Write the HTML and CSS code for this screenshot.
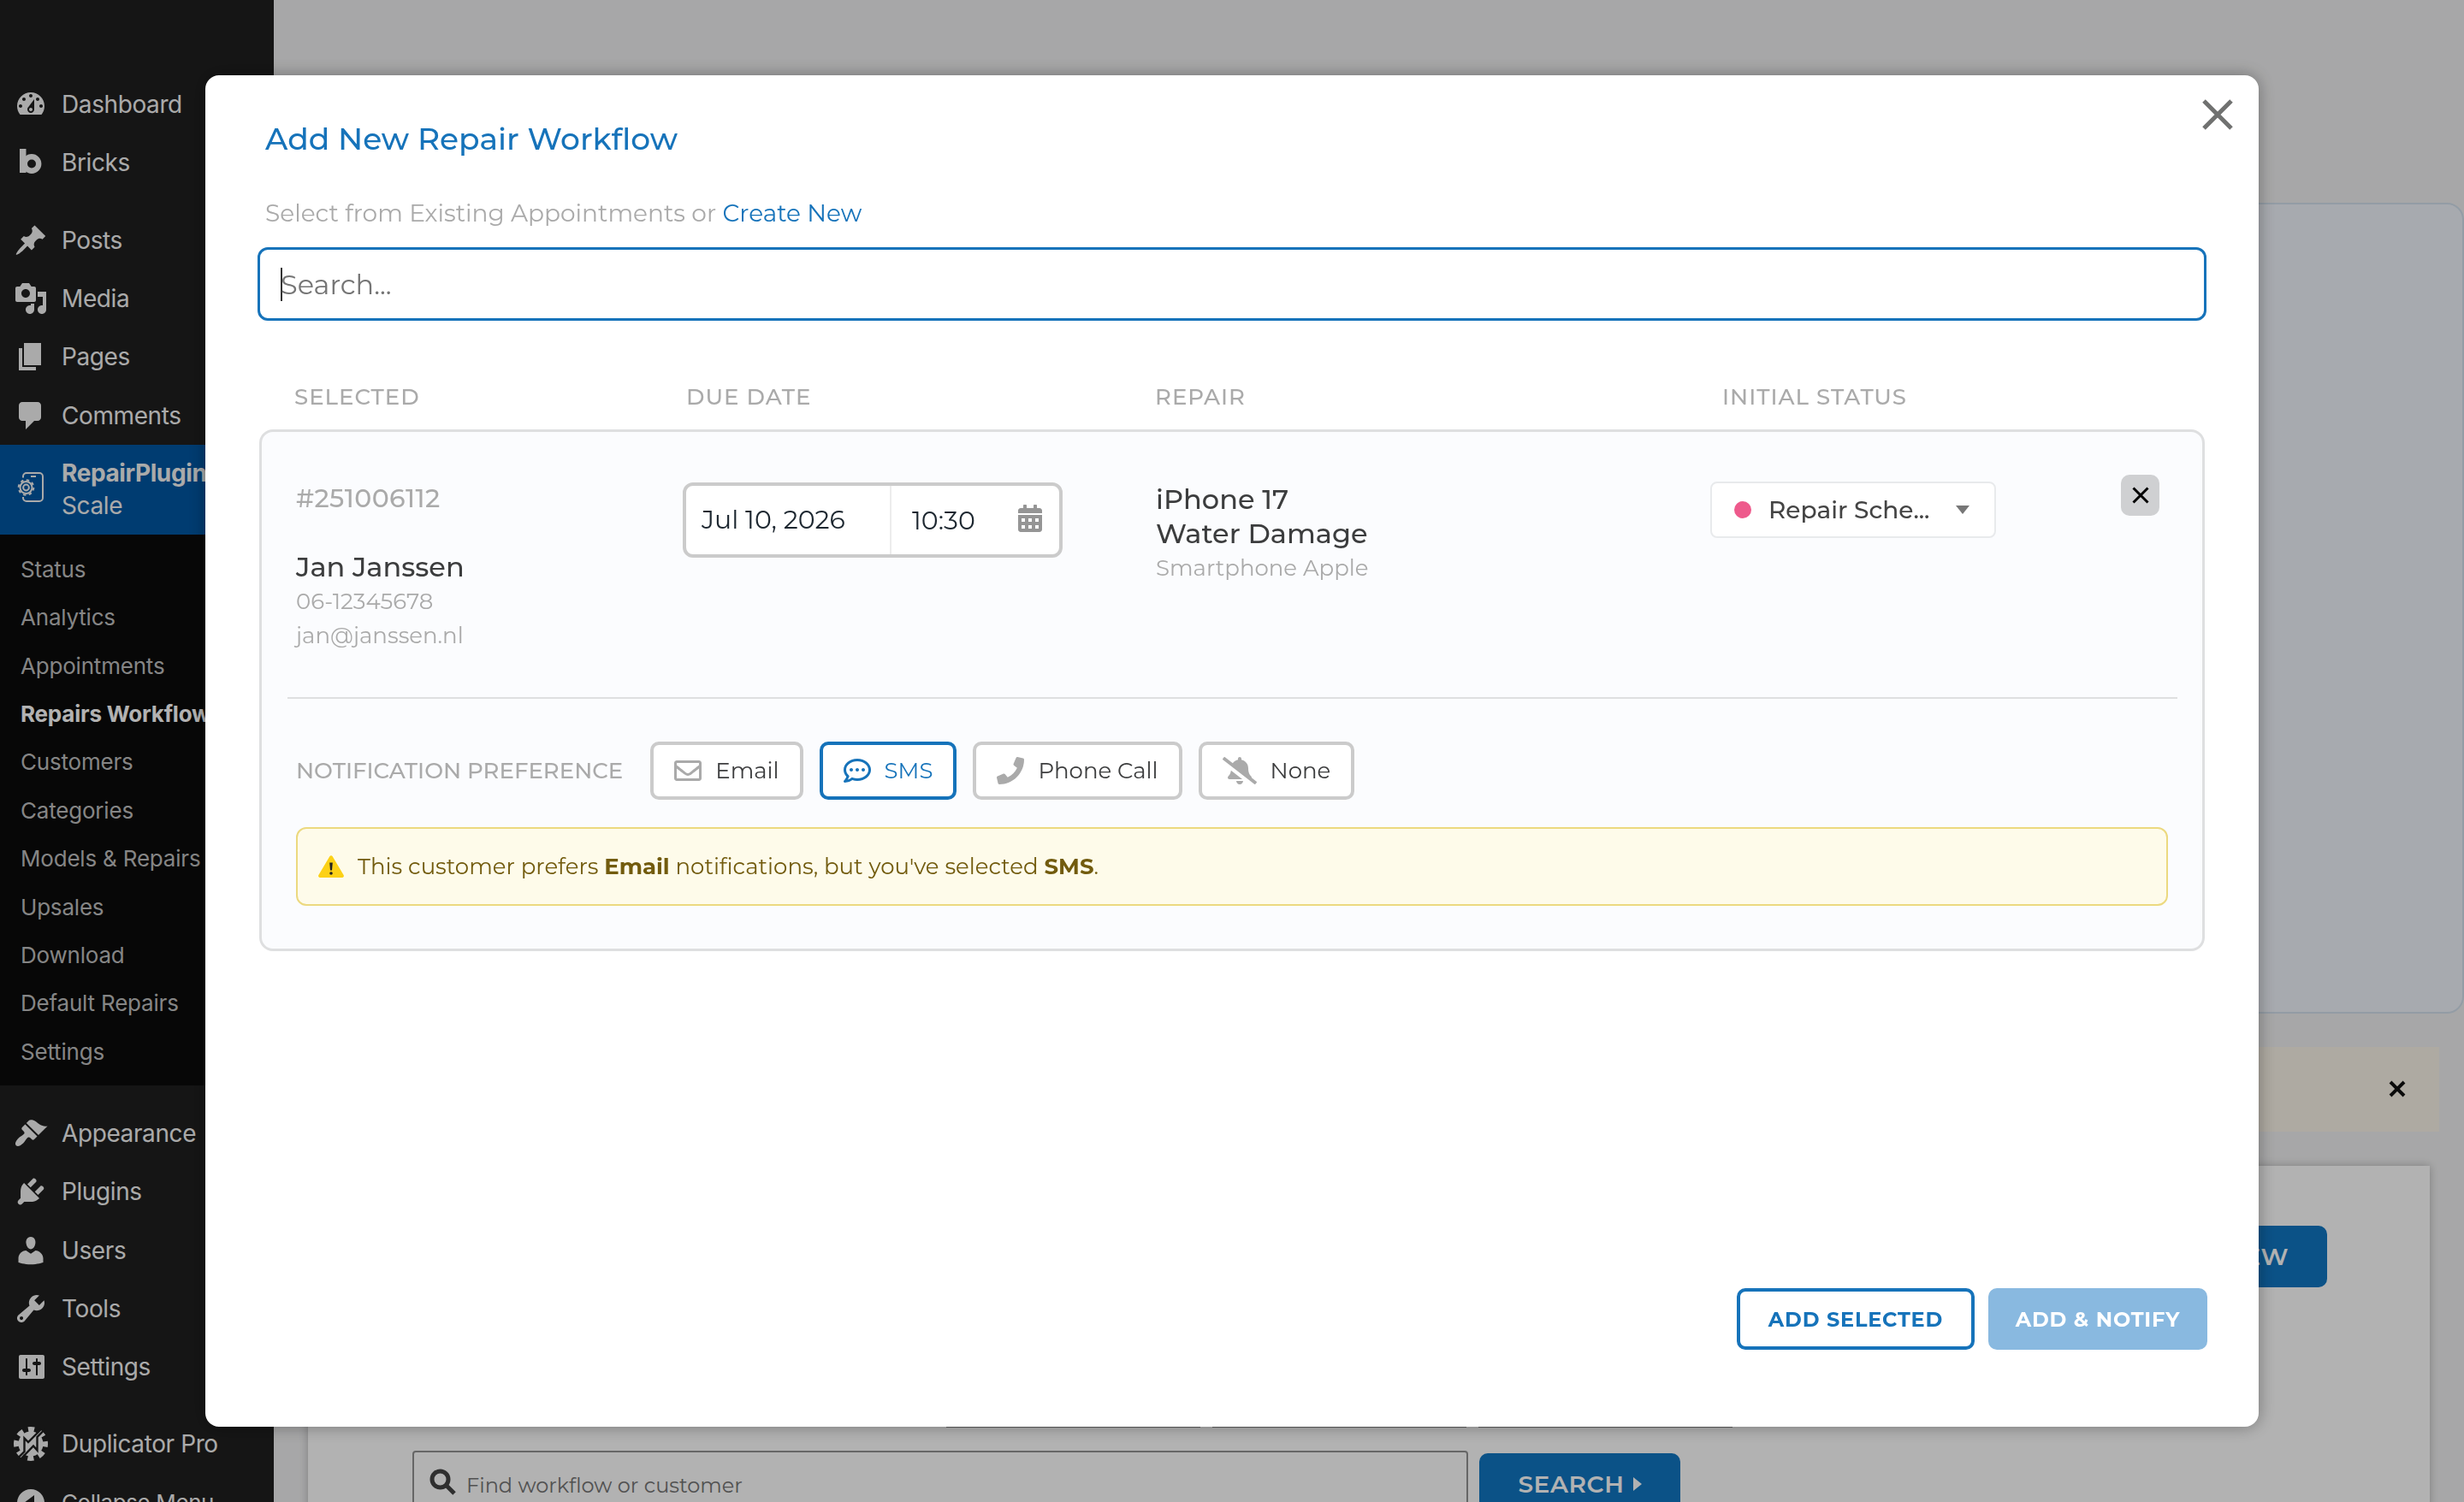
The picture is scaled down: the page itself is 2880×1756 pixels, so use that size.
FILE: index.html
```
<!DOCTYPE html>
<html lang="en">
  <head>
    <meta charset="UTF-8" />
    <meta name="viewport" content="width=device-width, initial-scale=1.0" />
    <title>Add New Repair Workflow</title>
    <link rel="stylesheet" href="styles.css">
  </head>
  <body>
    <div class="page">
      <nav class="sidebar">
        <ul class="menu">
          <li>
            <svg viewBox="0 0 20 20"><path fill-rule="evenodd" d="M3.76 16h12.48c1.1-1.37 1.76-3.11 1.76-5 0-4.42-3.58-8-8-8s-8 3.58-8 8c0 1.89.66 3.63 1.76 5zM10 4c.55 0 1 .45 1 1s-.45 1-1 1-1-.45-1-1 .45-1 1-1zM6 6c.55 0 1 .45 1 1s-.45 1-1 1-1-.45-1-1 .45-1 1-1zm8 0c.55 0 1 .45 1 1s-.45 1-1 1-1-.45-1-1 .45-1 1-1zm-5.37 5.55L12 7v6c0 1.1-.9 2-2 2s-2-.9-2-2c0-.57.24-1.08.63-1.45zM4 10c.55 0 1 .45 1 1s-.45 1-1 1-1-.45-1-1 .45-1 1-1zm12 0c.55 0 1 .45 1 1s-.45 1-1 1-1-.45-1-1 .45-1 1-1zm-5 3c0-.55-.45-1-1-1s-1 .45-1 1 .45 1 1 1 1-.45 1-1z"/></svg>
            <a href="#">Dashboard</a>
          </li>
          <li>
            <svg viewBox="0 0 40 40"><rect x="7" y="4" width="7.5" height="28"/><circle cx="21" cy="21.5" r="8.2" fill="none" stroke="currentColor" stroke-width="6.4"/></svg>
            <a href="#">Bricks</a>
          </li>
          <li class="separator"></li>
          <li>
            <svg viewBox="0 0 20 20"><path d="M10.44 3.02l1.82-1.82 6.36 6.35-1.83 1.82c-1.05-.68-2.48-.57-3.41.36l-.75.75c-.92.93-1.04 2.35-.35 3.41l-1.83 1.82-2.41-2.41-2.8 2.79c-.42.42-3.38 2.71-3.8 2.29s1.86-3.39 2.28-3.81l2.79-2.79L4.1 9.36l1.83-1.82c1.05.69 2.48.57 3.4-.36l.75-.75c.93-.92 1.05-2.35.36-3.41z"/></svg>
            <a href="#">Posts</a>
          </li>
          <li>
            <svg viewBox="0 0 20 20"><path fill-rule="evenodd" d="M13 11V4c0-.55-.45-1-1-1h-1.67L9 1H5L3.67 3H2c-.55 0-1 .45-1 1v7c0 .55.45 1 1 1h10c.55 0 1-.45 1-1zM7 4.5c1.38 0 2.5 1.12 2.5 2.5S8.38 9.5 7 9.5 4.5 8.38 4.5 7 5.62 4.5 7 4.5zM14 6h5v10.5c0 1.38-1.12 2.5-2.5 2.5S14 17.88 14 16.5s1.12-2.5 2.5-2.5c.17 0 .34.02.5.05V9h-3V6zm-4 8.05V13h2v3.5c0 1.38-1.12 2.5-2.5 2.5S7 17.88 7 16.5 8.12 14 9.5 14c.17 0 .34.02.5.05z"/></svg>
            <a href="#">Media</a>
          </li>
          <li>
            <svg viewBox="0 0 20 20"><path d="M6 15V2h10v13H6zm-1 1h8v2H3V5h2v11z"/></svg>
            <a href="#">Pages</a>
          </li>
          <li>
            <svg viewBox="0 0 20 20"><path d="M5 2h9c1.1 0 2 .9 2 2v7c0 1.1-.9 2-2 2h-2l-5 5v-5H5c-1.1 0-2-.9-2-2V4c0-1.1.9-2 2-2z"/></svg>
            <a href="#">Comments</a>
          </li>
          <li class="current">
            <svg viewBox="0 0 40 40" fill="none" stroke="currentColor" stroke-width="2">
              <path d="M11 6.500V5a4 4 0 0 1 4-4h15a4 4 0 0 1 4 4v25a4 4 0 0 1-4 4H15a4 4 0 0 1-4-4V29"/>
              <path d="M20 5h6"/>
              <circle cx="14.500" cy="18" r="3.400"/>
              <circle cx="14.500" cy="18" r="7"/>
              <circle cx="14.500" cy="18" r="8.800" stroke-dasharray="3.450 3.460"/>
            </svg>
            <a href="#"><b>RepairPlugin</b><br>Scale</a>
          </li>
        </ul>
        <ul class="submenu">
          <li><a href="#">Status</a></li>
          <li><a href="#">Analytics</a></li>
          <li><a href="#">Appointments</a></li>
          <li class="active"><a href="#">Repairs Workflow</a></li>
          <li><a href="#">Customers</a></li>
          <li><a href="#">Categories</a></li>
          <li><a href="#">Models &amp; Repairs</a></li>
          <li><a href="#">Upsales</a></li>
          <li><a href="#">Download</a></li>
          <li><a href="#">Default Repairs</a></li>
          <li><a href="#">Settings</a></li>
        </ul>
        <ul class="menu">
          <li class="separator"></li>
          <li>
            <svg viewBox="0 0 20 20"><path d="M14.48 11.06L7.41 3.99l1.5-1.5c.5-.56 2.3-.47 3.51.32 1.21.8 1.43 1.28 2.91 2.1 1.18.64 2.45 1.26 4.45.85zm-.71.71L6.7 4.7 4.93 6.47c-.39.39-.39 1.02 0 1.41l1.06 1.06c.39.39.39 1.03 0 1.42-.6.6-1.43 1.11-2.21 1.69-.35.26-.7.53-1.01.84C1.43 14.23.4 16.08 1.4 17.07c.99 1 2.84-.03 4.18-1.36.31-.31.58-.66.85-1.02.57-.78 1.08-1.61 1.69-2.21.39-.39 1.02-.39 1.41 0l1.06 1.06c.39.39 1.02.39 1.41 0z"/></svg>
            <a href="#">Appearance</a>
          </li>
          <li>
            <svg viewBox="0 0 20 20"><path d="M13.11 4.36L9.87 7.6 8 5.73l3.24-3.24c.35-.34 1.05-.2 1.56.32.52.51.66 1.21.31 1.55zm-8 1.77l.91-1.12 9.01 9.01-1.19.84c-.71.71-2.63 1.16-3.82 1.16H6.14L4.9 17.26c-.59.59-1.54.59-2.12 0-.59-.58-.59-1.53 0-2.12l1.24-1.24v-3.88c0-1.13.4-3.19 1.09-3.89zm7.26 3.97l3.24-3.24c.34-.35 1.04-.21 1.55.31.52.51.66 1.21.31 1.55l-3.24 3.25z"/></svg>
            <a href="#">Plugins</a>
          </li>
          <li>
            <svg viewBox="0 0 20 20"><path d="M10 9.25c-2.27 0-2.73-3.44-2.73-3.44C7 4.02 7.82 2 9.97 2c2.16 0 2.98 2.02 2.71 3.81 0 0-.41 3.44-2.68 3.44zm0 2.57L12.72 10c2.39 0 4.52 2.33 4.52 4.53v2.49s-3.65 1.13-7.24 1.13c-3.65 0-7.24-1.13-7.24-1.13v-2.49c0-2.25 1.94-4.48 4.47-4.48z"/></svg>
            <a href="#">Users</a>
          </li>
          <li>
            <svg viewBox="0 0 20 20"><path fill-rule="evenodd" d="M16.68 9.77c-1.34 1.34-3.3 1.67-4.95.99l-5.41 6.52c-.99.99-2.59.99-3.58 0s-.99-2.59 0-3.57l6.52-5.42c-.68-1.65-.35-3.61.99-4.95 1.28-1.28 3.12-1.62 4.72-1.06l-2.89 2.89 2.82 2.82 2.86-2.87c.53 1.58.18 3.39-1.08 4.65zM3.81 16.21c.4.39 1.04.39 1.43 0 .4-.4.4-1.04 0-1.43-.39-.4-1.03-.4-1.43 0-.39.39-.39 1.03 0 1.43z"/></svg>
            <a href="#">Tools</a>
          </li>
          <li>
            <svg viewBox="0 0 20 20"><path fill-rule="evenodd" d="M18 16V4c0-.55-.45-1-1-1H4c-.55 0-1 .45-1 1v12c0 .55.45 1 1 1h13c.55 0 1-.45 1-1zM8 11h1c.55 0 1 .45 1 1s-.45 1-1 1H8v1.500c0 .28-.22.5-.5.5s-.5-.22-.5-.5V13H6c-.55 0-1-.45-1-1s.45-1 1-1h1V5.500c0-.28.22-.5.5-.5s.5.22.5.5V11zm5-2h-1c-.55 0-1-.45-1-1s.45-1 1-1h1V5.500c0-.28.22-.5.5-.5s.5.22.5.5V7h1c.55 0 1 .45 1 1s-.45 1-1 1h-1v5.500c0 .28-.22.5-.5.5s-.5-.22-.5-.5V9z"/></svg>
            <a href="#">Settings</a>
          </li>
          <li class="separator"></li>
          <li>
            <svg viewBox="0 0 40 40">
              <circle cx="20" cy="20" r="14.500"/>
              <circle cx="20" cy="20" r="16.500" fill="none" stroke="currentColor" stroke-width="7" stroke-dasharray="6.960 6" stroke-dashoffset="3.480"/>
              <path class="cut" d="M4 37.500L12.500 29V13.500L17 18 33 2M8 38L23 22.500 27.500 27.500V12L36.500 3"/>
            </svg>
            <a href="#">Duplicator Pro</a>
          </li>
          <li class="collapse">
            <svg viewBox="0 0 40 40"><path fill-rule="evenodd" d="M20 4a16 16 0 1 0 0 32 16 16 0 0 0 0-32zM24 11v18L12 20z"/></svg>
            <a href="#">Collapse Menu</a>
          </li>
        </ul>
      </nav>

      <main class="content">
        <section class="info-panel"></section>
        <section class="notice">
          <svg viewBox="0 0 20 20"><path d="M2 2l16 16M18 2L2 18"/></svg>
        </section>
        <section class="workflow-card">
          <div class="card-actions">
            <button class="btn-blue btn-new">ADD NEW</button>
          </div>
          <div class="filters">
            <span></span>
            <span></span>
            <span></span>
          </div>
          <div class="find-row">
            <div class="find-input">
              <svg viewBox="0 0 32 32"><circle cx="12.500" cy="12.500" r="9.500"/><path d="M19.500 19.500l9.500 9.500"/></svg>
              <span>Find workflow or customer</span>
            </div>
            <button class="btn-blue btn-search">SEARCH <i class="arrow"></i></button>
          </div>
        </section>
      </main>
    </div>

    <div class="overlay">
      <section class="modal">
        <svg class="modal-close" viewBox="0 0 36 36"><path d="M2 2l32 32M34 2L2 34"/></svg>

        <h2>Add New Repair Workflow</h2>
        <p class="intro">Select from Existing Appointments or <a href="#">Create New</a></p>
        <div class="search"><i class="caret"></i>Search...</div>

        <div class="columns">
          <span>SELECTED</span>
          <span>DUE DATE</span>
          <span>REPAIR</span>
          <span>INITIAL STATUS</span>
        </div>

        <article class="appointment">
          <div class="details">
            <div class="customer">
              <span class="number">#251006112</span>
              <strong>Jan Janssen</strong>
              <span>06-12345678</span>
              <span>jan@janssen.nl</span>
            </div>
            <div class="date-box">
              <span class="date">Jul 10, 2026</span>
              <span class="time">10:30</span>
              <svg viewBox="0 0 448 512"><path d="M0 464c0 26.500 21.500 48 48 48h352c26.500 0 48-21.500 48-48V192H0zM400 64h-48V12c0-6.600-5.400-12-12-12h-40c-6.600 0-12 5.400-12 12v52H160V12c0-6.600-5.400-12-12-12h-40c-6.600 0-12 5.400-12 12v52H48C21.500 64 0 85.500 0 112v48h448v-48c0-26.500-21.500-48-48-48z"/><path fill="#fff" d="M64 256h64v64H64zM192 256h64v64h-64zM320 256h64v64h-64zM64 384h64v64H64zM192 384h64v64h-64zM320 384h64v64h-64z"/></svg>
            </div>
            <div class="repair">
              <strong>iPhone 17</strong>
              <strong>Water Damage</strong>
              <span>Smartphone Apple</span>
            </div>
            <div class="status">
              <i class="dot"></i>
              <span>Repair Sche...</span>
              <svg viewBox="0 0 16 10"><path d="M0 0h16L8 10z"/></svg>
            </div>
            <button class="remove">
              <svg viewBox="0 0 20 20"><path d="M1.500 1.500l17 17M18.500 1.500l-17 17"/></svg>
            </button>
          </div>

          <div class="notify">
            <span class="notify-label">NOTIFICATION PREFERENCE</span>
            <button class="choice">
              <svg viewBox="0 0 512 512"><path d="M464 64H48C21.490 64 0 85.490 0 112v288c0 26.510 21.490 48 48 48h416c26.510 0 48-21.490 48-48V112c0-26.510-21.490-48-48-48zm0 48v40.805c-22.422 18.259-58.168 46.651-134.587 106.490-16.841 13.247-50.201 45.072-73.413 44.701-23.208.375-56.579-31.459-73.413-44.701C106.180 199.465 70.425 171.067 48 152.805V112h416zM48 400V214.398c22.914 18.251 55.409 43.862 104.938 82.646 21.857 17.205 60.134 55.186 103.062 54.955 42.717.231 80.509-37.199 103.053-54.947 49.528-38.783 82.032-64.401 104.947-82.653V400H48z"/></svg>
              Email
            </button>
            <button class="choice selected">
              <svg viewBox="0 0 512 512"><path d="M144 208c-17.700 0-32 14.300-32 32s14.300 32 32 32 32-14.300 32-32-14.300-32-32-32zm112 0c-17.700 0-32 14.300-32 32s14.300 32 32 32 32-14.300 32-32-14.300-32-32-32zm112 0c-17.700 0-32 14.300-32 32s14.300 32 32 32 32-14.300 32-32-14.300-32-32-32zM256 32C114.600 32 0 125.100 0 240c0 47.600 19.900 91.200 52.900 126.300C38 405.700 7 439.100 6.500 439.500c-6.600 7-8.400 17.200-4.600 26S14.400 480 24 480c61.500 0 110-25.700 139.100-46.300C192 442.800 223.200 448 256 448c141.400 0 256-93.100 256-208S397.400 32 256 32zm0 368c-26.700 0-53.100-4.100-78.400-12.100l-22.700-7.200-19.500 13.800c-14.300 10.100-33.900 21.400-57.500 29 7.300-12.100 14.400-25.700 19.900-40.200l10.600-28.100-20.600-21.800C69.700 314.100 48 282.200 48 240c0-88.200 93.300-160 208-160s208 71.800 208 160-93.300 160-208 160z"/></svg>
              SMS
            </button>
            <button class="choice">
              <svg viewBox="0 0 512 512"><path d="M493.400 24.600l-104-24c-11.300-2.600-22.900 3.300-27.500 13.900l-48 112c-4.200 9.800-1.400 21.300 6.900 28l60.600 49.600c-36 76.700-98.900 140.500-177.200 177.200l-49.600-60.600c-6.800-8.300-18.200-11.100-28-6.900l-112 48C3.900 366.500-2 378.100.6 389.400l24 104C27.100 504.200 36.700 512 48 512c256.100 0 464-207.500 464-464 0-11.200-7.700-20.900-18.600-23.400z"/></svg>
              Phone Call
            </button>
            <button class="choice">
              <svg class="icon-bell" viewBox="0 0 640 512"><path d="M633.820 458.100l-90.620-70.050c.19-1.380.8-2.660.8-4.060.05-7.550-2.610-15.290-8.610-21.710-19.320-20.760-55.470-51.990-55.470-154.290 0-77.700-54.480-139.900-127.940-155.160V32c0-17.670-14.320-32-31.980-32s-31.980 14.330-31.980 32v20.840c-40.330 8.380-74.660 31.070-97.590 62.570L45.470 3.370C38.490-2.050 28.430-.8 23.010 6.180L3.370 31.450C-2.050 38.420-.8 48.470 6.180 53.900l588.350 454.730c6.980 5.430 17.030 4.170 22.460-2.810l19.640-25.270c5.420-6.970 4.170-17.020-2.810-22.450zM157.230 251.540c-8.610 67.960-36.410 93.330-52.620 110.750-6 6.420-8.660 14.160-8.610 21.710.11 16.400 12.980 32 32.100 32h241.120L157.230 251.540zM320 512c35.320 0 63.970-28.650 63.970-64H256.030c0 35.350 28.650 64 63.970 64z"/></svg>
              None
            </button>
          </div>

          <div class="warning">
            <svg viewBox="0 0 30 26"><path fill="#fcd116" d="M13.300 1.200a2 2 0 0 1 3.400 0L29.600 23a1.900 1.900 0 0 1-1.700 2.900H2.100A1.900 1.900 0 0 1 .4 23z"/><path fill="#222" d="M13.200 8.500h3.600l-.8 9h-2z"/><circle cx="15" cy="21" r="1.800" fill="#222"/></svg>
            <p>This customer prefers <b>Email</b> notifications, but you've selected <b>SMS</b>.</p>
          </div>
        </article>

        <footer>
          <button class="btn-outline">ADD SELECTED</button>
          <button class="btn-light">ADD &amp; NOTIFY</button>
        </footer>
      </section>
    </div>
  </body>
</html>
```
FILE: styles.css
```
* {
  margin: 0;
  padding: 0;
  box-sizing: border-box;
}

body {
  height: 1756px;
  overflow: hidden;
  font-family: "Montserrat", "Inter", sans-serif;
  background-color: #f0f0f1;
}

a {
  color: inherit;
  text-decoration: none;
}

ul {
  list-style: none;
}

button {
  border: none;
  font-family: inherit;
}

.page {
  display: flex;
  height: 1756px;
  overflow: hidden;
}

/* Sidebar */

.sidebar {
  flex: none;
  width: 320px;
  padding-top: 88px;
  background-color: #1f1f1f;
  color: #f4f4f4;
  font-family: "Inter", sans-serif;
  font-size: 28px;
  letter-spacing: -0.4px;
}

.menu li {
  display: flex;
  align-items: center;
  gap: 16px;
  height: 68.3px;
  padding-left: 16px;
  white-space: nowrap;
}

.menu li.separator {
  height: 22px;
}

.menu svg {
  flex: none;
  width: 40px;
  height: 40px;
  fill: currentColor;
}

.menu .cut {
  fill: none;
  stroke: #1f1f1f;
  stroke-width: 2.4;
}

.menu li.current {
  height: 105px;
  background-color: #0056a2;
  line-height: 38px;
}

.menu li.current svg {
  fill: none;
}

.menu li.collapse {
  font-size: 26px;
}

.submenu {
  height: 644px;
  padding: 13px 0 0 24px;
  background-color: #0b0b0b;
  color: #bfbfbf;
  font-size: 26px;
  letter-spacing: -0.2px;
  white-space: nowrap;
}

.submenu li {
  height: 56.4px;
  line-height: 56.4px;
}

.submenu .active {
  color: #fff;
  font-weight: 700;
}

/* Page behind the modal */

.content {
  flex: 1;
  padding: 237px 0 0 40px;
}

.info-panel {
  height: 948px;
  border: 2px solid #d3e0ed;
  border-radius: 20px;
  background-color: #f0f4fb;
}

.notice {
  display: flex;
  align-items: center;
  justify-content: flex-end;
  height: 99px;
  margin: 39px 29px 0 0;
  padding-right: 39px;
  background-color: #faf4e8;
}

.notice svg {
  width: 20px;
  height: 20px;
  margin-bottom: 1px;
  stroke: #111;
  stroke-width: 4;
}

.workflow-card {
  height: 500px;
  margin: 40px 40px 0 0;
  padding: 70px 120px 0 122px;
  background-color: #fff;
  box-shadow: 0 0 10px rgba(0, 0, 0, 0.25);
}

.card-actions {
  display: flex;
  justify-content: flex-end;
}

.btn-blue {
  border-radius: 10px;
  background-color: #1176c2;
  color: #fff;
  font-size: 28px;
  font-weight: 600;
  letter-spacing: 0.6px;
}

.btn-new {
  width: 242px;
  height: 72px;
}

.filters {
  display: flex;
  gap: 14px;
  margin: 92px 0 0 624px;
}

.filters span {
  width: 297px;
  height: 72px;
  border: 2px solid #8c8c8c;
}

.find-row {
  display: flex;
  gap: 13px;
  margin-top: 27px;
}

.find-input {
  display: flex;
  align-items: center;
  gap: 11px;
  width: 1234px;
  height: 80px;
  padding-left: 18px;
  border: 2px solid #929292;
  border-radius: 4px;
  color: #757575;
  font-size: 24px;
}

.find-input svg {
  width: 32px;
  height: 32px;
  margin-bottom: 6px;
  fill: none;
  stroke: #444;
  stroke-width: 5;
}

.btn-search {
  display: flex;
  align-items: center;
  justify-content: center;
  gap: 10px;
  width: 235px;
  height: 72px;
  margin-top: 3px;
}

.arrow {
  border-left: 10px solid #fff;
  border-top: 8px solid transparent;
  border-bottom: 8px solid transparent;
}

/* Modal */

.overlay {
  position: fixed;
  inset: 0;
  display: flex;
  align-items: center;
  justify-content: center;
  background-color: rgba(0, 0, 0, 0.3);
}

.modal {
  position: relative;
  display: flex;
  flex-direction: column;
  width: 2400px;
  height: 1580px;
  padding: 50px 60px 90px 61px;
  border-radius: 16px;
  background-color: #fff;
  box-shadow: 0 0 20px rgba(0, 0, 0, 0.35);
}

.modal-close {
  position: absolute;
  top: 28px;
  right: 30px;
  width: 36px;
  height: 36px;
  stroke: #707170;
  stroke-width: 5;
}

.modal h2 {
  padding-left: 9px;
  color: #1673ba;
  font-size: 36px;
  font-weight: 500;
  line-height: 48px;
}

.intro {
  margin-top: 43px;
  padding-left: 9px;
  color: #aaa;
  font-size: 28px;
  line-height: 40px;
}

.intro a {
  color: #1673ba;
}

.search {
  display: flex;
  align-items: center;
  width: 2278px;
  height: 86px;
  margin-top: 20px;
  padding-left: 24px;
  border: 3px solid #1673ba;
  border-radius: 12px;
  color: #757575;
  font-size: 32px;
}

.caret {
  width: 2px;
  height: 39px;
  margin-right: -2px;
  background-color: #333;
}

.columns {
  display: grid;
  grid-template-columns: 458px 548px 663px auto;
  margin-top: 69px;
  padding-left: 43px;
  color: #aaa;
  font-size: 26px;
  font-weight: 500;
  letter-spacing: 1px;
  line-height: 40px;
}

.appointment {
  width: 2274px;
  height: 610px;
  margin: 18px 0 0 2px;
  padding: 0 29px 0 30px;
  border: 3px solid #dedfe0;
  border-radius: 16px;
  background-color: #fbfcfe;
}

.details {
  display: grid;
  grid-template-columns: 452px 553px 648px 480px 45px;
  align-items: start;
  height: 312px;
  padding: 50px 0 0 10px;
  border-bottom: 2px solid #dedfe0;
}

.customer,
.repair {
  display: flex;
  flex-direction: column;
  padding-top: 8px;
  color: #aaa;
  font-size: 26px;
  line-height: 40px;
}

.repair {
  padding-top: 9px;
}

.customer strong,
.repair strong {
  color: #3c3d3e;
  font-size: 32px;
  font-weight: 500;
}

.customer .number {
  margin-bottom: 40px;
  font-size: 30px;
  font-weight: 500;
  letter-spacing: 0.4px;
}

.date-box {
  display: flex;
  align-items: center;
  width: 444px;
  height: 88px;
  margin-top: 9px;
  border: 4px solid #cbcbcb;
  border-radius: 12px;
  background-color: #fff;
  color: #1d2730;
  font-size: 30px;
}

.date {
  width: 240px;
  padding-left: 18px;
  border-right: 2px solid #ececec;
  line-height: 80px;
}

.time {
  width: 148px;
  padding-left: 24px;
}

.date-box svg {
  width: 28px;
  height: 32px;
  margin-bottom: 5px;
  fill: #959595;
}

.status {
  display: flex;
  align-items: center;
  width: 334px;
  height: 66px;
  margin-top: 8px;
  padding-left: 26px;
  border: 2px solid #e8eaec;
  border-radius: 8px;
  background-color: #fff;
  color: #444;
  font-size: 28px;
  font-weight: 500;
}

.status .dot {
  width: 20px;
  height: 20px;
  margin-right: 20px;
  border-radius: 50%;
  background-color: #ee5a8c;
}

.status svg {
  width: 16px;
  height: 10px;
  margin-left: 31px;
  fill: #777;
}

.remove {
  display: flex;
  align-items: center;
  justify-content: center;
  width: 45px;
  height: 48px;
  border-radius: 10px;
  background-color: #cfd0d2;
}

.remove svg {
  width: 20px;
  height: 20px;
  stroke: #000;
  stroke-width: 3;
}

.notify {
  display: flex;
  align-items: center;
  gap: 19px;
  margin-top: 50px;
  padding-left: 10px;
}

.notify-label {
  margin-right: 13px;
  color: #aaa;
  font-size: 26px;
  font-weight: 500;
}

.choice {
  display: flex;
  align-items: center;
  gap: 16px;
  height: 68px;
  padding: 0 24px;
  border: 4px solid #cbcbcb;
  border-radius: 10px;
  background-color: #fff;
  color: #3c3d3e;
  font-size: 26px;
}

.choice svg {
  width: 32px;
  height: 32px;
  fill: #aaa;
}

.choice .icon-bell {
  width: 40px;
}

.choice.selected {
  border-color: #1673ba;
  color: #1673ba;
}

.choice.selected svg {
  fill: #1673ba;
}

.warning {
  display: flex;
  align-items: center;
  gap: 16px;
  width: 2188px;
  height: 92px;
  margin: 32px 0 0 10px;
  padding-left: 24px;
  border: 2px solid #ecd97f;
  border-radius: 12px;
  background-color: #fefbea;
  color: #725b0d;
  font-size: 26px;
}

.warning svg {
  width: 30px;
  height: 26px;
}

.modal footer {
  display: flex;
  justify-content: flex-end;
  gap: 16px;
  margin-top: auto;
}

.modal footer button {
  height: 72px;
  border-radius: 10px;
  font-size: 24px;
  font-weight: 700;
  letter-spacing: 0.8px;
}

.btn-outline {
  width: 278px;
  border: 4px solid #1673ba;
  background-color: #fff;
  color: #1673ba;
}

.btn-light {
  width: 256px;
  background-color: #89b9e0;
  color: #fff;
}
```
